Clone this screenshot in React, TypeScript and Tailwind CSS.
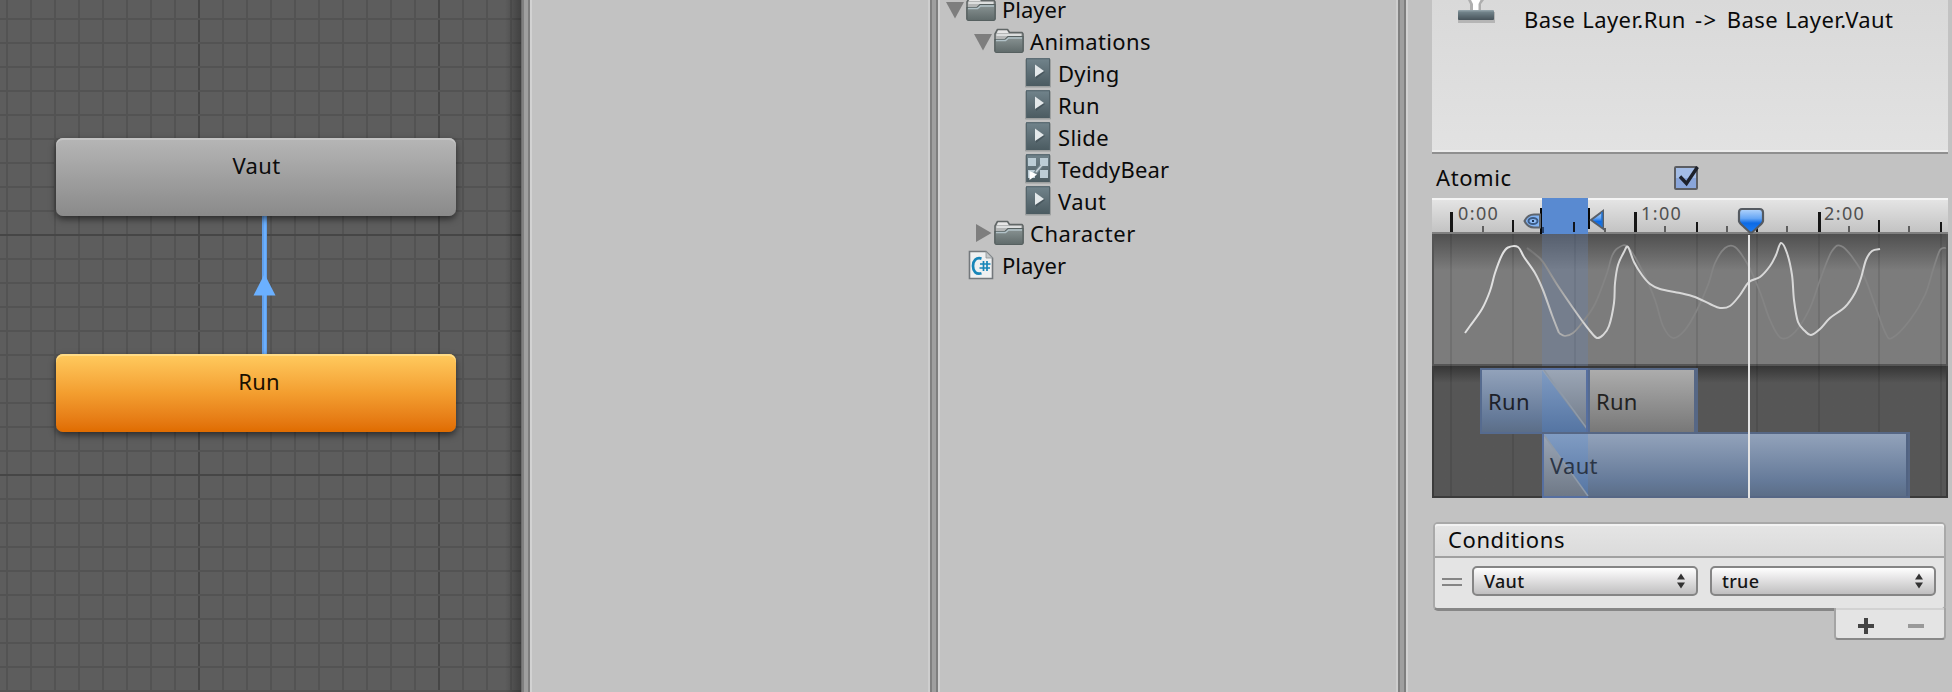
import React from "react";

const FONT = "font-['Noto_Sans','Open_Sans',sans-serif]";

function Splitter({ edge = true }: { edge?: boolean }) {
  return (
    <div className="flex h-full shrink-0">
      {edge && <div className="w-[2px] bg-[#cecece]" />}
      <div className="w-[2px] bg-[#808080]" />
      <div className="w-[4px] bg-[#9f9f9f]" />
      <div className="w-[2px] bg-[#7e7e7e]" />
      <div className="w-[2px] bg-[#d2d2d2]" />
    </div>
  );
}

function StateGraph() {
  const cols = Array.from({ length: 22 }, (_, i) => 6 + i * 24);
  const rows = Array.from({ length: 29 }, (_, i) => 18 + i * 24);
  return (
    <div className="relative h-[692px] w-[521px] shrink-0 overflow-hidden bg-[#5d5d5d]">
      <svg width="521" height="692" className="block">
        <defs>
          <linearGradient id="edge" x1="0" x2="1">
            <stop offset="0" stopColor="#000" stopOpacity="0" />
            <stop offset="1" stopColor="#000" stopOpacity="0.3" />
          </linearGradient>
        </defs>
        {cols.map((x, i) => (
          <rect key={i} x={x} y="0" width="2" height="692" fill={i === 8 || i === 18 ? "#464646" : "#535353"} />
        ))}
        {rows.map((y, i) => (
          <rect key={i} x="0" y={y} width="521" height="2" fill={i === 9 || i === 19 ? "#464646" : "#535353"} />
        ))}
        <rect x="505" y="0" width="16" height="692" fill="url(#edge)" />
        <rect x="262" y="216" width="5" height="139" fill="#62a0ea" />
        <rect x="264" y="216" width="2" height="139" fill="#6bb0ff" />
        <path d="M264.500 274L275.500 295.500H253.500Z" fill="#6bb0ff" />
      </svg>
      <div className="absolute left-[56px] top-[138px] flex h-[78px] w-[400px] justify-center rounded-[7px] bg-linear-to-b from-[#b6b6b6] to-[#8a8a8a] text-[22px] leading-[32px] text-[#0c0c0c] shadow-[inset_0_2px_0_#c4c4c4,0_3px_7px_rgba(0,0,0,0.55)]">
        <span className="ml-[1px] mt-[11px] tracking-[0.4px]">Vaut</span>
      </div>
      <div className="absolute left-[56px] top-[354px] flex h-[78px] w-[400px] justify-center rounded-[7px] bg-linear-to-b from-[#ffcb5e] via-[#f39e2f] to-[#e06c00] text-[22px] leading-[32px] text-[#1a1000] shadow-[inset_0_2px_0_#ffdc87,0_3px_7px_rgba(0,0,0,0.55)]">
        <span className="ml-[6px] mt-[11px] tracking-[0.2px]">Run</span>
      </div>
    </div>
  );
}

function Folder() {
  return (
    <svg width="30" height="28" viewBox="0 0 30 28" className="block shrink-0">
      <defs>
        <linearGradient id="fold" x1="0" y1="0" x2="0" y2="1">
          <stop offset="0" stopColor="#8a9494" />
          <stop offset="1" stopColor="#5f6a6a" />
        </linearGradient>
      </defs>
      <path d="M1 25V8L3.500 3.500H13.500L15.500 6.500H28L29 8V25Z" fill="#b4b6b6" stroke="#606666" strokeWidth="1.600" strokeLinejoin="round" />
      <path d="M4 4.500H13L14.500 7H3Z" fill="#e6e6e6" />
      <path d="M2.500 9H27" stroke="#dcdede" strokeWidth="2" />
      <path d="M1 13.500H11L14 10.500H29V25Q29 26.500 27.500 26.500H2.500Q1 26.500 1 25Z" fill="url(#fold)" stroke="#566060" strokeWidth="1.200" />
      <path d="M2 14.500H11.500L14.500 12H28" fill="none" stroke="#b2c2c8" strokeWidth="1.600" />
    </svg>
  );
}

function ClipIcon({ controller = false }: { controller?: boolean }) {
  return (
    <svg width="26" height="30" viewBox="0 0 26 30" className="block shrink-0">
      <defs>
        <linearGradient id="tile" x1="0" y1="0" x2="0" y2="1">
          <stop offset="0" stopColor="#72848c" />
          <stop offset="1" stopColor="#4b5b61" />
        </linearGradient>
      </defs>
      <rect x="0" y="1" width="26" height="28.500" rx="1" fill="#8d9192" opacity="0.7" />
      <rect x="1" y="0" width="24" height="28" fill="url(#tile)" />
      <path d="M1.500 28V0.800H24.500V28" fill="none" stroke="#54646b" />
      {controller ? (
        <g>
          <path d="M3 4H11V12H3ZM15 4H23V12H15ZM15 16H23V24H15ZM3 16H10V24H3Z" fill="#bccdd6" />
          <path d="M8 19L15 10.500L18 12.500L11 21Z" fill="#788a92" />
          <path d="M17 11L11 18" stroke="#c9d4da" strokeWidth="1.500" />
          <path d="M4.500 17L12 20.500L4.500 26Z" fill="#fff" />
        </g>
      ) : (
        <g>
          <path d="M11 8L20 14L11 21Z" fill="#3c4a50" opacity="0.6" />
          <path d="M10 6.500L19 13L10 19Z" fill="#e3e8ea" />
        </g>
      )}
    </svg>
  );
}

function ScriptIcon() {
  return (
    <svg width="26" height="30" viewBox="0 0 26 30" className="block shrink-0">
      <path d="M1.500 1.500H18L24.500 8V28.500H1.500Z" fill="#eef0f1" stroke="#73787c" strokeWidth="1.600" />
      <path d="M18 1.500V8H24.500Z" fill="#c4c8ca" stroke="#8d9296" strokeWidth="0.800" />
      <path d="M13.500 8.600C8 7 5 11 5 16S8 25 13.500 23.300" fill="none" stroke="#1685b8" strokeWidth="2.700" />
      <path d="M15.500 11V21M19 11V21M12 14H22.500M11.500 18H22" stroke="#1685b8" strokeWidth="1.700" />
    </svg>
  );
}

function Fold({ open }: { open: boolean }) {
  return (
    <svg width="18" height="32" viewBox="0 0 18 32" className="block shrink-0">
      <path d={open ? "M0 8H18L9 24.500Z" : "M2 6L17.500 15L2 24Z"} fill="#7e7e7e" />
    </svg>
  );
}

function Row({ pad, fold, icon, label, cls }: { pad: string; fold?: boolean; icon: React.ReactNode; label: string; cls: string }) {
  return (
    <div className={`flex h-[32px] items-start whitespace-pre text-[22px] leading-[32px] text-[#0a0a0a] ${pad}`}>
      {fold !== undefined && (
        <span className="mr-[2px]">
          <Fold open={fold} />
        </span>
      )}
      {icon}
      <span className={`-mt-[1px] ${cls}`}>{label}</span>
    </div>
  );
}

function ProjectTree() {
  return (
    <div className="h-[692px] w-[456px] shrink-0">
      <div className="-mt-[6px] flex flex-col">
        <Row pad="pl-[6px]" fold={true} icon={<Folder />} label="Player" cls="ml-[6px]" />
        <Row pad="pl-[34px]" fold={true} icon={<Folder />} label="Animations" cls="ml-[6px] tracking-[0.35px]" />
        <Row pad="pl-[85px]" icon={<ClipIcon />} label="Dying" cls="ml-[7px] tracking-[0.3px]" />
        <Row pad="pl-[85px]" icon={<ClipIcon />} label="Run" cls="ml-[7px] tracking-[0.3px]" />
        <Row pad="pl-[85px]" icon={<ClipIcon />} label="Slide" cls="ml-[7px] tracking-[0.3px]" />
        <Row pad="pl-[85px]" icon={<ClipIcon controller />} label="TeddyBear" cls="ml-[7px] tracking-[0.2px]" />
        <Row pad="pl-[85px]" icon={<ClipIcon />} label="Vaut" cls="ml-[7px] tracking-[0.4px]" />
        <Row pad="pl-[34px]" fold={false} icon={<Folder />} label="Character" cls="ml-[6px] tracking-[0.55px]" />
        <Row pad="pl-[28px]" icon={<ScriptIcon />} label="Player" cls="ml-[8px]" />
      </div>
    </div>
  );
}

const ticks = [
  [18, 20, 3], [50, 6, 2], [80, 12, 2], [110, 2, 2], [141, 10, 2], [172, 4, 2], [202, 20, 3], [232, 6, 2], [264, 10, 2],
  [294, 6, 2], [324, 10, 2], [354, 6, 2], [386, 20, 3], [416, 6, 2], [446, 12, 2], [476, 6, 2], [508, 10, 2],
];
const gridX = [18, 80, 142, 202, 264, 324, 386, 446, 508];

function smooth(points: number[][]) {
  let d = `M${points[0][0]} ${points[0][1]}`;
  for (let i = 0; i < points.length - 1; i++) {
    const p0 = points[i - 1] ?? points[i];
    const p1 = points[i];
    const p2 = points[i + 1];
    const p3 = points[i + 2] ?? p2;
    d += `C${p1[0] + (p2[0] - p0[0]) / 6} ${p1[1] + (p2[1] - p0[1]) / 6} ${p2[0] - (p3[0] - p1[0]) / 6} ${p2[1] - (p3[1] - p1[1]) / 6} ${p2[0]} ${p2[1]}`;
  }
  return d;
}

const runCurve = [[33, 135], [38, 128], [50, 111], [58, 93], [63, 75], [70, 57], [76, 49.500], [86, 49], [92, 59], [103, 75], [111, 92], [120, 117], [127, 135]];
const runTail = [[127, 135], [133, 138], [141, 135], [150, 125], [163, 106], [175, 75], [180, 58], [186, 50], [196, 49], [211, 74], [223, 102], [231, 128], [241, 140], [253, 132], [265, 112], [276, 87], [283, 65], [293, 50], [303, 49], [316, 67], [328, 94], [338, 122], [349, 140], [363, 134], [378, 110], [388, 82], [400, 53], [411, 49], [430, 74], [443, 107], [453, 134], [460, 140], [478, 122], [493, 97], [501, 72], [508, 52], [514, 50]];
const vautCurve = [[95, 50], [104, 57], [111, 64], [126, 88], [141, 110], [151, 124], [158, 133], [165, 140], [171, 137], [177, 128], [182, 105], [183, 85], [186, 67], [192, 54], [196, 49], [202, 64], [210, 77], [218, 86], [228, 91], [248, 95], [263, 99], [278, 106], [288, 110], [298, 108], [308, 97], [317, 84], [328, 79], [338, 68], [344, 57], [349, 45], [355, 55], [360, 77], [362, 102], [366, 124], [373, 133], [379, 137], [388, 131], [398, 120], [413, 109], [423, 95], [429, 80], [434, 62], [440, 53], [448, 51]];

function Ruler() {
  return (
    <div className="flex h-[36px] border-b-2 border-[#808080] bg-linear-to-b from-[#e6e6e6] to-[#c3c3c3] text-[18px] leading-[24px] text-[#505050] shadow-[inset_0_2px_0_#f4f4f4]">
      <span className="ml-[26px] mt-[3px] w-[183px] tracking-[1.4px]">0:00</span>
      <span className="mt-[3px] w-[183px] tracking-[1.4px]">1:00</span>
      <span className="mt-[3px] tracking-[1.4px]">2:00</span>
    </div>
  );
}

function Timeline() {
  return (
    <div className="relative flex h-[300px] w-[516px] flex-col">
      <Ruler />
      <div className="h-[132px] border-x-2 border-b-2 border-[#555] bg-linear-to-b from-[#505050] via-[#7c7c7c] via-28% to-[#7c7c7c]" />
      <div className="flex h-[132px] flex-col border-x-2 border-b-2 border-[#3b3b3b] bg-linear-to-b from-[#363636] to-[#565656] to-13%" />
      <svg width="516" height="300" viewBox="0 0 516 300" className="absolute left-0 top-0 overflow-visible">
        <defs>
          <linearGradient id="clipBlue" x1="0" y1="0" x2="0" y2="1">
            <stop offset="0" stopColor="#93a3bb" />
            <stop offset="0.750" stopColor="#657a99" />
            <stop offset="1" stopColor="#5b6d86" />
          </linearGradient>
          <linearGradient id="clipGray" x1="0" y1="0" x2="0" y2="1">
            <stop offset="0" stopColor="#adadad" />
            <stop offset="1" stopColor="#777" />
          </linearGradient>
          <linearGradient id="overGray" x1="0" y1="0" x2="0" y2="1">
            <stop offset="0" stopColor="#9ba6b6" />
            <stop offset="1" stopColor="#6f7987" />
          </linearGradient>
          <linearGradient id="overBlue" x1="0" y1="0" x2="0" y2="1">
            <stop offset="0" stopColor="#809cc3" />
            <stop offset="1" stopColor="#5575a3" />
          </linearGradient>
          <linearGradient id="head" x1="0" y1="0" x2="0" y2="1">
            <stop offset="0" stopColor="#b4d5fc" />
            <stop offset="0.400" stopColor="#66a6f5" />
            <stop offset="0.600" stopColor="#0d6ae4" />
            <stop offset="1" stopColor="#1c7cf5" />
          </linearGradient>
          <linearGradient id="fadeOut" gradientUnits="userSpaceOnUse" x1="100" y1="0" x2="156" y2="0">
            <stop offset="0" stopColor="#e0e0e0" />
            <stop offset="1" stopColor="#848484" />
          </linearGradient>
          <linearGradient id="fadeIn" gradientUnits="userSpaceOnUse" x1="100" y1="0" x2="156" y2="0">
            <stop offset="0" stopColor="#757575" />
            <stop offset="1" stopColor="#d8d8d8" />
          </linearGradient>
        </defs>
        {gridX.map((x) => (
          <rect key={x} x={x} y="36" width="2" height="262" fill="#000" opacity="0.09" />
        ))}
        {ticks.map(([x, h, w]) => (
          <rect key={x} x={x} y={34 - h} width={w} height={h} fill={h > 9 ? "#161616" : "#5f5f5f"} />
        ))}
        <rect x="110" y="36" width="46" height="132" fill="#6786b5" opacity="0.300" />
        <path d={smooth(runTail)} fill="none" stroke="url(#fadeOut)" strokeWidth="1.700" />
        <path d={smooth(runCurve)} fill="none" stroke="url(#fadeOut)" strokeWidth="2" />
        <path d={smooth(vautCurve)} fill="none" stroke="url(#fadeIn)" strokeWidth="2" />

        <rect x="49" y="171" width="108" height="64" fill="url(#clipBlue)" stroke="#566b8f" strokeWidth="2" />
        <rect x="110" y="172" width="46" height="62" fill="url(#overGray)" />
        <path d="M110 172L156 234H110Z" fill="url(#overBlue)" />
        <path d="M112 172L156 232" stroke="#8e9aa9" strokeWidth="1.500" />
        <path d="M110 171H155M110 235H155" stroke="#566fa0" strokeWidth="2" />
        <rect x="154" y="170" width="2" height="66" fill="#566fa0" />
        <rect x="157" y="171" width="108" height="64" fill="url(#clipGray)" stroke="#566785" strokeWidth="2" />
        <rect x="262" y="170" width="4" height="66" fill="#566785" />
        <rect x="156" y="170" width="2" height="66" fill="#566b8f" />

        <rect x="111" y="235" width="366" height="64" fill="url(#clipBlue)" stroke="#566785" strokeWidth="2" />
        <rect x="474" y="236" width="2" height="62" fill="#516382" />
        <rect x="112" y="236" width="44" height="62" fill="url(#overBlue)" />
        <path d="M112 236L156 298H112Z" fill="url(#overGray)" />
        <path d="M112 237L156 298" stroke="#8e9aa9" strokeWidth="1.500" />
        <path d="M111 236V298M110 299H156" stroke="#566fa0" strokeWidth="2" />

        <rect x="110" y="0" width="46" height="36" fill="#598ad1" />
        <path d="M108 10H110V36H108ZM156 10H158V31H156Z" fill="#080808" />
        <path d="M110 29H112V35H110Z" fill="#264069" />
        <rect x="141" y="24" width="2" height="10" fill="#11151c" />
        <path d="M92.500 23C95 18 99 16.500 102 16.500H108V29.500H102C99 29.500 95 28 92.500 23Z" fill="#82b4f4" stroke="#5e646c" strokeWidth="2" />
        <ellipse cx="101" cy="23" rx="4.500" ry="3" fill="#8dbbf5" stroke="#3d5c86" strokeWidth="2" />
        <rect x="100" y="22" width="2" height="2" fill="#1d3455" />
        <path d="M171 13V30.500L159 22Z" fill="url(#head)" stroke="#585f69" strokeWidth="2" />
        <path d="M170 14V29" stroke="#2170cf" strokeWidth="1.500" />

        <rect x="316" y="37" width="2" height="263" fill="#e4e4e4" />
        <path d="M310 11H327.500Q331 11 331 14.500V23C331 25 328 27 326 29L320 34.500H318L312 29C310 27 307 25 307 23V14.500Q307 11 310 11Z" fill="url(#head)" stroke="#555a61" strokeWidth="2.200" />
      </svg>
      <div className="absolute left-[56px] top-[187px] text-[22px] leading-[32px] tracking-[0.3px] text-[#1d2129]">Run</div>
      <div className="absolute left-[164px] top-[187px] text-[22px] leading-[32px] tracking-[0.2px] text-[#222]">Run</div>
      <div className="absolute left-[118px] top-[251px] text-[22px] leading-[32px] tracking-[0.3px] text-[#2b3546]">Vaut</div>
    </div>
  );
}

function Select({ label, w }: { label: string; w: string }) {
  return (
    <div className={`flex h-[30px] items-center justify-between rounded-[5px] border-2 border-[#858585] bg-linear-to-b from-[#fff] to-[#c0bfc0] pl-[10px] pr-[10px] text-[18px] font-medium leading-[26px] tracking-[0.3px] text-[#151515] ${w}`}>
      <span className="pb-[1px]">{label}</span>
      <svg width="10" height="16" viewBox="0 0 10 16">
        <path d="M5 0.500L9 6.500H1ZM1 9.500H9L5 15.500Z" fill="#333" />
      </svg>
    </div>
  );
}

function Conditions() {
  return (
    <div className="mt-[24px] w-[514px] pl-[1px]">
      <div className="rounded-[5px] border-x-2 border-b-[3px] border-t-2 border-x-[#a9a9a9] border-b-[#868686] border-t-[#a8a8a8] bg-[#e4e4e4]">
        <div className="flex h-[34px] items-start rounded-t-[3px] border-b-2 border-[#a0a0a0] bg-linear-to-b from-[#e5e5e5] to-[#dbdbdb] pl-[13px] text-[22px] leading-[32px] text-[#0a0a0a] shadow-[inset_0_2px_0_#f2f2f2]">
          <span className="-mt-[1px] tracking-[0.6px]">Conditions</span>
        </div>
        <div className="flex h-[50px] pl-[7px] pt-[8px]">
          <svg width="20" height="30" viewBox="0 0 20 30" className="mr-[10px] shrink-0">
            <path d="M0 12H20V14H0ZM0 18H20V20H0Z" fill="#858585" />
          </svg>
          <Select label="Vaut" w="w-[226px]" />
          <span className="w-[12px]" />
          <Select label="true" w="w-[226px]" />
        </div>
      </div>
      <div className="-mt-[3px] ml-auto flex h-[32px] w-[112px] justify-center gap-[34px] rounded-b-[4px] border-x-2 border-b-2 border-x-[#a4a4a4] border-b-[#888] bg-[#e4e4e4] pl-[2px] shadow-[inset_0_2px_0_#d2d2d2]">
        <svg width="16" height="16" viewBox="0 0 16 16" className="mt-[10px]">
          <path d="M6 0H10V6H16V10H10V16H6V10H0V6H6Z" fill="#434343" />
        </svg>
        <svg width="16" height="16" viewBox="0 0 16 16" className="mt-[10px]">
          <path d="M0 6H16V10H0Z" fill="#999" />
        </svg>
      </div>
    </div>
  );
}

function Inspector() {
  return (
    <div className="flex h-[692px] flex-1 flex-col pl-[24px]">
      <div className="flex h-[154px] w-[516px] border-b-2 border-[#8f8f8f] bg-linear-to-b from-[#d9d9d9] to-[#e2e2e2] shadow-[inset_0_-2px_0_#ececec]">
        <svg width="40" height="26" viewBox="0 0 40 26" className="ml-[24px] shrink-0">
          <defs>
            <linearGradient id="base" x1="0" y1="0" x2="0" y2="1">
              <stop offset="0" stopColor="#98a8ae" />
              <stop offset="0.250" stopColor="#6f8087" />
              <stop offset="1" stopColor="#47535a" />
            </linearGradient>
          </defs>
          <path d="M12 0H28L25 4V10H14V4Z" fill="#a6a6a6" opacity="0.85" />
          <path d="M15 0H24.500L22.500 4V10H17V4Z" fill="#fff" />
          <rect x="2" y="12" width="37" height="11" fill="#8f8f8f" opacity="0.5" />
          <rect x="2" y="10" width="36" height="10" rx="1" fill="url(#base)" />
        </svg>
        <span className="ml-[28px] mt-[3px] whitespace-pre text-[22px] leading-[32px] tracking-[0.4px] text-[#0a0a0a] [word-spacing:1px]">
          Base Layer.Run<span className="tracking-[1.5px] [word-spacing:2px]">{" -> "}</span>Base Layer.Vaut
        </span>
      </div>
      <div className="flex h-[44px] items-start text-[22px] leading-[32px] text-[#0a0a0a]">
        <span className="ml-[4px] mt-[7px] w-[238px] tracking-[0.6px]">Atomic</span>
        <svg width="28" height="28" viewBox="0 0 28 28" className="mt-[10px]">
          <rect x="1" y="3" width="22" height="22" rx="1" fill="#a3bce6" stroke="#5b5d62" strokeWidth="2" />
          <rect x="2" y="14" width="20" height="10" fill="#89a5da" />
          <path d="M6 12.500L12.500 19.500L23.500 3" fill="none" stroke="#1d212b" strokeWidth="3.400" />
        </svg>
      </div>
      <Timeline />
      <Conditions />
    </div>
  );
}

export default function App() {
  return (
    <div className={`flex h-[692px] w-[1952px] overflow-hidden bg-[#c2c2c2] ${FONT}`}>
      <StateGraph />
      <div className="w-[1px] bg-[#6d6d6d]" />
      <Splitter edge={false} />
      <div className="w-[396px] shrink-0" />
      <Splitter />
      <ProjectTree />
      <Splitter />
      <Inspector />
    </div>
  );
}
